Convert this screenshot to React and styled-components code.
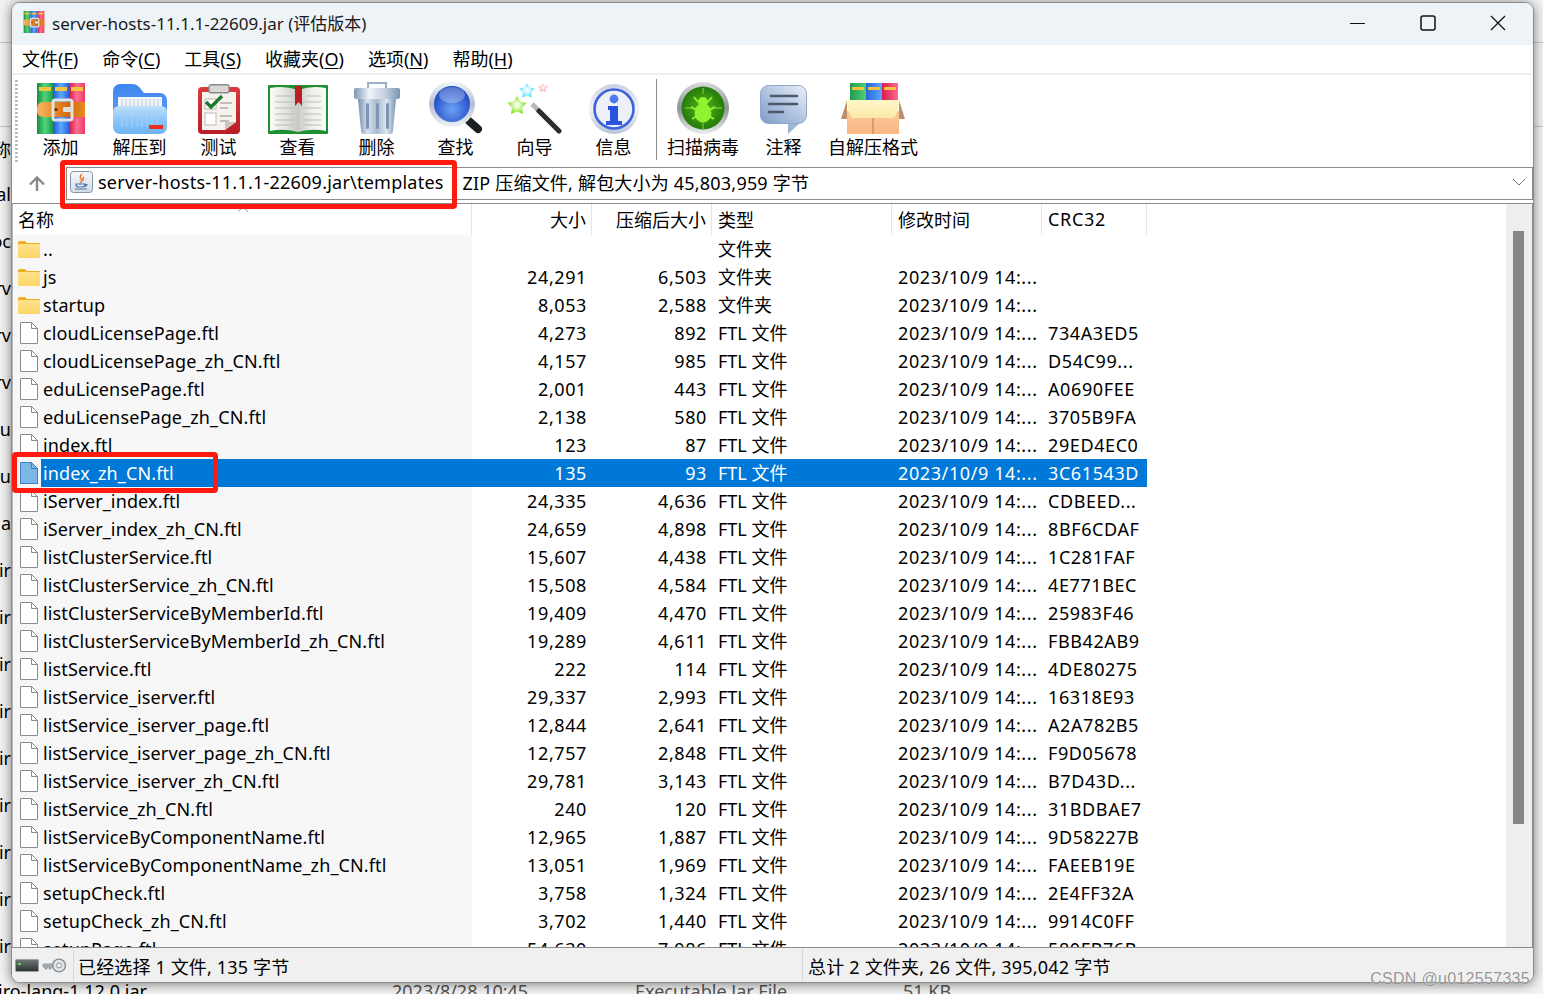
import React from "react";
import styled, { createGlobalStyle } from "styled-components";

const UI_FONT = `"Noto Sans", "Noto Sans CJK SC", sans-serif`;
const BORDER = "#8c8c8c";

const GlobalStyle = createGlobalStyle`
  html, body { margin: 0; padding: 0; overflow: hidden; background: #f3f3f3; }
  * { box-sizing: border-box; }
`;

const hLinear = (id, stops) => (
  <linearGradient id={id} x1="0" y1="0" x2="1" y2="0">
    {stops.map((c, i) => <stop key={i} offset={i / (stops.length - 1)} stopColor={c} />)}
  </linearGradient>
);
const vLinear = (id, stops) => (
  <linearGradient id={id} x1="0" y1="0" x2="0" y2="1">
    {stops.map((c, i) => <stop key={i} offset={i / (stops.length - 1)} stopColor={c} />)}
  </linearGradient>
);

const starPoints = (cx, cy, r) => {
  const pts = [];
  for (let i = 0; i < 10; i++) {
    const rad = i % 2 ? r * 0.55 : r;
    const a = -Math.PI / 2 + (i * Math.PI) / 5;
    pts.push(`${(cx + rad * Math.cos(a)).toFixed(1)},${(cy + rad * Math.sin(a)).toFixed(1)}`);
  }
  return pts.join(" ");
};

const RarIcon = ({ width = 48, height = 51, prefix = "add" }) => (
  <svg width={width} height={height} viewBox="0 0 48 51">
    <defs>
      {hLinear(`${prefix}G`, ["#178c41", "#52d47c", "#1a9a4a"])}
      {hLinear(`${prefix}B`, ["#2457d4", "#5aa9ff", "#2a62dc"])}
      {hLinear(`${prefix}R`, ["#d4164a", "#ff6f90", "#ea3a66"])}
      {hLinear(`${prefix}O`, ["#f6b866", "#e8902c", "#d2690e", "#e98a22"])}
    </defs>
    <rect x="0" y="0" width="16" height="51" fill={`url(#${prefix}G)`} />
    <rect x="16" y="0" width="16" height="51" fill={`url(#${prefix}B)`} />
    <rect x="32" y="0" width="16" height="51" fill={`url(#${prefix}R)`} />
    <rect x="2" y="4" width="12" height="4" fill="#f2c53c" />
    <rect x="18" y="4" width="12" height="4" fill="#f2c53c" />
    <rect x="34" y="4" width="12" height="4" fill="#f2c53c" />
    <path d="M6 19H48V34H6Q0 34 0 26.5T6 19Z" fill={`url(#${prefix}O)`} />
    <rect x="16" y="17" width="19" height="20" rx="2" fill="none" stroke="#e2e2e2" strokeWidth="3" />
    <rect x="26" y="24" width="9" height="5" rx="1" fill="#dcdcdc" />
    <circle cx="19" cy="26.5" r="1.6" fill="#5a3208" />
  </svg>
);

const FolderIcon = () => (
  <svg width="54" height="51" viewBox="0 0 54 51">
    <defs>
      {vLinear("folderBack", ["#3f86ee", "#5d9ff3"])}
      {vLinear("folderFront", ["#bfe0fb", "#8cc6f8", "#6db3f4"])}
    </defs>
    <path d="M0 8A7 7 0 0 1 7 1H19Q24 1 27 5L31 10H47A7 7 0 0 1 54 17V36H0Z" fill="url(#folderBack)" />
    <rect x="5" y="14" width="44" height="22" fill="#f1f4f8" />
    <path d="M9 16V24M13 16V24M17 16V24M21 16V24M25 16V24M29 16V24M33 16V24M37 16V24M41 16V24M45 16V24" stroke="#b9c6d6" strokeWidth="1" />
    <path d="M0 29Q0 23 7 23H47Q54 23 54 29V44A7 7 0 0 1 47 51H7A7 7 0 0 1 0 44Z" fill="url(#folderFront)" />
    <path d="M9 27V44M14 27V44M19 27V44M24 27V44M29 27V44M34 27V44M39 27V44M44 27V44" stroke="#a6d0f6" strokeWidth="1" />
    <rect x="36" y="42" width="14" height="4" fill="#e8301c" />
  </svg>
);

const TestIcon = () => (
  <svg width="42" height="50" viewBox="0 0 42 50">
    <defs>{vLinear("testRed", ["#dc3a3e", "#b81e28"])}</defs>
    <rect x="0" y="3" width="42" height="47" rx="4" fill="url(#testRed)" />
    <path d="M4 8H38V38L27 46H4Z" fill="#f6f3ef" />
    <path d="M38 38L27 46V38Z" fill="#cfc7c0" />
    <rect x="11" y="0.8" width="20" height="8" rx="2" fill="#d8d8d8" stroke="#8a8a8a" strokeWidth="1.4" />
    <rect x="7" y="15" width="11" height="10" fill="#fff" stroke="#b9b3ad" />
    <path d="M8 18L13 23L24 12" fill="none" stroke="#1b7a2c" strokeWidth="3.4" />
    <rect x="7" y="29" width="11" height="12" fill="#fff" stroke="#bdb7b1" />
    <path d="M22 19H34M22 24H30M22 32H34M22 37H31" stroke="#b4aaa2" strokeWidth="1.4" />
  </svg>
);

const BookIcon = () => (
  <svg width="60" height="49" viewBox="0 0 60 49">
    <defs>
      {hLinear("bookL", ["#fbfbf9", "#e6e6e2", "#c8c8c4"])}
      {hLinear("bookR", ["#c8c8c4", "#efefec", "#fafafa"])}
    </defs>
    <rect x="0" y="0" width="60" height="49" rx="1" fill="#1f8f31" />
    <path d="M2 3Q16 0 30 5V47Q16 43 2 46Z" fill="url(#bookL)" />
    <path d="M30 5Q44 0 58 3V46Q44 43 30 47Z" fill="url(#bookR)" />
    <path d="M7 11H26M7 17H26M7 23H26M7 29H26M7 35H26M7 40H26M35 17H53M35 23H53M35 29H53M35 35H53M35 40H53M38 11H53" stroke="#bcbcb8" strokeWidth="1.2" />
    <path d="M27 1H34V21L30.5 17L27 21Z" fill="#bd1d22" />
  </svg>
);

const TrashIcon = () => (
  <svg width="46" height="53" viewBox="0 0 46 53">
    <defs>
      {hLinear("trashLid", ["#7d97b6", "#eef4fa", "#c4d2e0", "#7c95b2"])}
      {hLinear("trashBody", ["#7590b0", "#d6e1ec", "#a8bbcf", "#dde6ef", "#7d96b3"])}
    </defs>
    <path d="M14 8V2H32V8" fill="none" stroke="#9cb0c4" strokeWidth="2" />
    <path d="M4 18H42L39 50Q39 53 36 53H10Q7 53 7 50Z" fill="url(#trashBody)" />
    <rect x="0" y="7" width="46" height="11" rx="2" fill="url(#trashLid)" />
    <rect x="12" y="22" width="3" height="26" rx="1.5" fill="#7e95b1" />
    <rect x="22" y="22" width="3" height="26" rx="1.5" fill="#7e95b1" />
    <rect x="32" y="22" width="3" height="26" rx="1.5" fill="#7e95b1" />
  </svg>
);

const SearchIcon = () => (
  <svg width="54" height="53" viewBox="0 0 54 53">
    <defs>
      <radialGradient id="lens" cx="0.5" cy="0.65" r="0.6">
        <stop offset="0" stopColor="#6da2f4" />
        <stop offset="1" stopColor="#1c46c4" />
      </radialGradient>
      {vLinear("lensRing", ["#f4f7fb", "#b4c0d0", "#eef1f6"])}
    </defs>
    <path d="M36 36L49 48" stroke="#8c8c8c" strokeWidth="6" />
    <path d="M40 40L49 48" stroke="#1c1f24" strokeWidth="8" strokeLinecap="round" />
    <circle cx="23" cy="23" r="23" fill="url(#lensRing)" />
    <circle cx="23" cy="23" r="18" fill="url(#lens)" />
    <ellipse cx="23" cy="14" rx="13" ry="8" fill="#fff" opacity="0.28" />
  </svg>
);

const WizardIcon = () => (
  <svg width="54" height="50" viewBox="0 0 54 50">
    <defs>
      <radialGradient id="starG"><stop offset="0.2" stopColor="#f2ffe0" /><stop offset="1" stopColor="#7fe019" /></radialGradient>
      <radialGradient id="starC"><stop offset="0.2" stopColor="#f0ffff" /><stop offset="1" stopColor="#4fdcff" /></radialGradient>
      <radialGradient id="starP"><stop offset="0.2" stopColor="#fff2f2" /><stop offset="1" stopColor="#ff9aa8" /></radialGradient>
    </defs>
    <polygon points={starPoints(9, 22, 10)} fill="url(#starG)" />
    <polygon points={starPoints(19, 7, 8)} fill="url(#starC)" />
    <polygon points={starPoints(35, 4, 5)} fill="url(#starP)" />
    <path d="M24 20L31 27" stroke="#b8b8b8" strokeWidth="5" />
    <path d="M31 27L51 47" stroke="#2c2e32" strokeWidth="5" strokeLinecap="round" />
  </svg>
);

const InfoIcon = () => (
  <svg width="50" height="50" viewBox="0 0 50 50">
    <defs>{vLinear("infoRing", ["#c8d2e4", "#f2f4f8", "#b8c4da"])}</defs>
    <circle cx="25" cy="25" r="25" fill="url(#infoRing)" />
    <circle cx="25" cy="25" r="19.5" fill="#edf0f6" stroke="#3f62dd" strokeWidth="2.6" />
    <circle cx="25" cy="15" r="4.4" fill="#4e7cf0" />
    <path d="M19 22H29V37H33V41H17V37H21V26H19Z" fill="#2a54e0" />
  </svg>
);

const ScanIcon = () => (
  <svg width="52" height="52" viewBox="0 0 52 52">
    <defs>
      {vLinear("scanRing", ["#d8dcdc", "#8c9494", "#e8ecec"])}
      <radialGradient id="scanDisc">
        <stop offset="0" stopColor="#5db51f" />
        <stop offset="1" stopColor="#237a08" />
      </radialGradient>
    </defs>
    <circle cx="26" cy="26" r="26" fill="url(#scanRing)" />
    <circle cx="26" cy="26" r="21.5" fill="url(#scanDisc)" />
    <path d="M26 6V12M8 26H14M38 26H45M26 41V47" stroke="#6cc22e" strokeWidth="1.4" />
    <path d="M17 15L21 20M35 15L31 20M14 25L20 28M38 25L32 28M15 37L20 34M37 37L32 34" stroke="#8cf030" strokeWidth="2" fill="none" />
    <ellipse cx="26" cy="31" rx="8.5" ry="9.5" fill="#90f230" />
    <circle cx="26" cy="20" r="5" fill="#90f230" />
  </svg>
);

const CommentIcon = () => (
  <svg width="48" height="49" viewBox="0 0 48 49">
    <defs>
      <linearGradient id="bubble" x1="0" y1="1" x2="1" y2="0">
        <stop offset="0" stopColor="#7d9bc9" />
        <stop offset="0.55" stopColor="#b7c9e2" />
        <stop offset="1" stopColor="#edf2f9" />
      </linearGradient>
    </defs>
    <path d="M28 37V49L41 37Z" fill="#a3b6d0" />
    <rect x="0.5" y="0.5" width="46" height="38" rx="8" fill="url(#bubble)" stroke="#8fa7cb" />
    <path d="M11 11H37M9 19H37M9 27H23" stroke="#4c5a6e" strokeWidth="2.6" strokeLinecap="round" />
  </svg>
);

const SfxIcon = () => (
  <svg width="64" height="51" viewBox="0 0 64 51">
    <defs>
      {hLinear("sfxG", ["#1f9c4c", "#4fd07a"])}
      {hLinear("sfxB", ["#2a62dc", "#5aa8ff"])}
      {hLinear("sfxR", ["#d81c4e", "#ff6a8c"])}
      {vLinear("sfxBox", ["#fdc89a", "#f7b884"])}
      {vLinear("sfxFlap", ["#fff6c8", "#fce9a8"])}
    </defs>
    <rect x="9" y="0" width="16" height="20" fill="url(#sfxG)" />
    <rect x="25" y="0" width="16" height="20" fill="url(#sfxB)" />
    <rect x="41" y="0" width="16" height="20" fill="url(#sfxR)" />
    <rect x="11" y="4" width="12" height="3" fill="#f2c53c" />
    <rect x="27" y="4" width="12" height="3" fill="#f2c53c" />
    <rect x="43" y="4" width="12" height="3" fill="#f2c53c" />
    <path d="M0 36L6 17V36ZM64 36L58 17V36Z" fill="#bd8f6c" />
    <rect x="6" y="28" width="52" height="23" fill="url(#sfxBox)" />
    <rect x="31" y="34" width="2" height="17" fill="#d99d70" />
    <path d="M5 17H59L55 32Q54 35 51 35H13Q10 35 9 32Z" fill="url(#sfxFlap)" />
  </svg>
);

const JavaIcon = () => (
  <svg width="23" height="22" viewBox="0 0 23 22">
    <defs>{vLinear("javaBg", ["#f7f8fa", "#d3dbe4"])}</defs>
    <rect x="0.5" y="0.5" width="22" height="21" rx="3" fill="url(#javaBg)" stroke="#8496aa" />
    <path d="M12 3Q9 6 11 8T10 12M14 6Q12 8 13.5 9.5" fill="none" stroke="#e8762b" strokeWidth="1.4" />
    <path d="M6 13H15Q15 16 12.5 16H8.5Q6 16 6 13ZM15 13.5H17Q17 15 14.5 15.5M5 18H17" fill="none" stroke="#4f78aa" strokeWidth="1.2" />
  </svg>
);

const UpArrow = () => (
  <svg width="18" height="16" viewBox="0 0 18 16">
    <path d="M9 15V2M2 8.5L9 1.5L16 8.5" fill="none" stroke="#8a8a8a" strokeWidth="2.4" />
  </svg>
);

const DocIcon = ({ $selected }) => (
  <svg width="18" height="22" viewBox="0 0 18 22">
    <path
      d="M0.5 0.5H11.5L17.5 6.5V21.5H0.5Z"
      fill={$selected ? "#7db7e8" : "#fff"}
      stroke={$selected ? "#3d80bf" : "#8a8a8a"}
    />
    <path d="M11.5 0.5V6.5H17.5" fill="none" stroke={$selected ? "#3d80bf" : "#8a8a8a"} />
  </svg>
);

const DirIcon = () => (
  <svg width="22" height="17" viewBox="0 0 22 17">
    <defs>{vLinear("dirFront", ["#ffe28c", "#fcd568"])}</defs>
    <path d="M0 1.5Q0 0 1.5 0H7L9 2H22V5H0Z" fill="#eeb125" />
    <rect x="0" y="3" width="22" height="14" rx="1" fill="url(#dirFront)" />
  </svg>
);

const DriveIcon = () => (
  <svg width="24" height="13" viewBox="0 0 24 13">
    <defs>{vLinear("driveBg", ["#6f7779", "#2d3234"])}</defs>
    <rect x="0.5" y="0.5" width="23" height="12" rx="1" fill="url(#driveBg)" stroke="#9aa0a2" />
    <rect x="3" y="4" width="3" height="2" fill="#54e04a" />
  </svg>
);

const KeyIcon = () => (
  <svg width="24" height="15" viewBox="0 0 24 15">
    <circle cx="17" cy="7.5" r="6.4" fill="#dfe4e8" stroke="#858d92" strokeWidth="1.4" />
    <circle cx="17" cy="7.5" r="2.4" fill="#fff" stroke="#858d92" />
    <path d="M11 6H1V9H3V11H5V9H7V11H9V9H11Z" fill="#a6adb2" stroke="#7c8489" strokeWidth="0.6" />
  </svg>
);

const TOOLS = [
  { label: "添加", icon: <RarIcon /> },
  { label: "解压到", icon: <FolderIcon /> },
  { label: "测试", icon: <TestIcon /> },
  { label: "查看", icon: <BookIcon /> },
  { label: "删除", icon: <TrashIcon /> },
  { label: "查找", icon: <SearchIcon /> },
  { label: "向导", icon: <WizardIcon /> },
  { label: "信息", icon: <InfoIcon /> },
];
const TOOLS_AFTER = [
  { label: "扫描病毒", icon: <ScanIcon /> },
  { label: "注释", icon: <CommentIcon /> },
  { label: "自解压格式", icon: <SfxIcon /> },
];

const MENUS = [
  ["文件", "F"],
  ["命令", "C"],
  ["工具", "S"],
  ["收藏夹", "O"],
  ["选项", "N"],
  ["帮助", "H"],
];

const TIME = "2023/10/9 14:...";
const FILES = [
  ["..", "", "", "文件夹", "", ""],
  ["js", "24,291", "6,503", "文件夹", TIME, ""],
  ["startup", "8,053", "2,588", "文件夹", TIME, ""],
  ["cloudLicensePage.ftl", "4,273", "892", "FTL 文件", TIME, "734A3ED5"],
  ["cloudLicensePage_zh_CN.ftl", "4,157", "985", "FTL 文件", TIME, "D54C99..."],
  ["eduLicensePage.ftl", "2,001", "443", "FTL 文件", TIME, "A0690FEE"],
  ["eduLicensePage_zh_CN.ftl", "2,138", "580", "FTL 文件", TIME, "3705B9FA"],
  ["index.ftl", "123", "87", "FTL 文件", TIME, "29ED4EC0"],
  ["index_zh_CN.ftl", "135", "93", "FTL 文件", TIME, "3C61543D"],
  ["iServer_index.ftl", "24,335", "4,636", "FTL 文件", TIME, "CDBEED..."],
  ["iServer_index_zh_CN.ftl", "24,659", "4,898", "FTL 文件", TIME, "8BF6CDAF"],
  ["listClusterService.ftl", "15,607", "4,438", "FTL 文件", TIME, "1C281FAF"],
  ["listClusterService_zh_CN.ftl", "15,508", "4,584", "FTL 文件", TIME, "4E771BEC"],
  ["listClusterServiceByMemberId.ftl", "19,409", "4,470", "FTL 文件", TIME, "25983F46"],
  ["listClusterServiceByMemberId_zh_CN.ftl", "19,289", "4,611", "FTL 文件", TIME, "FBB42AB9"],
  ["listService.ftl", "222", "114", "FTL 文件", TIME, "4DE80275"],
  ["listService_iserver.ftl", "29,337", "2,993", "FTL 文件", TIME, "16318E93"],
  ["listService_iserver_page.ftl", "12,844", "2,641", "FTL 文件", TIME, "A2A782B5"],
  ["listService_iserver_page_zh_CN.ftl", "12,757", "2,848", "FTL 文件", TIME, "F9D05678"],
  ["listService_iserver_zh_CN.ftl", "29,781", "3,143", "FTL 文件", TIME, "B7D43D..."],
  ["listService_zh_CN.ftl", "240", "120", "FTL 文件", TIME, "31BDBAE7"],
  ["listServiceByComponentName.ftl", "12,965", "1,887", "FTL 文件", TIME, "9D58227B"],
  ["listServiceByComponentName_zh_CN.ftl", "13,051", "1,969", "FTL 文件", TIME, "FAEEB19E"],
  ["setupCheck.ftl", "3,758", "1,324", "FTL 文件", TIME, "2E4FF32A"],
  ["setupCheck_zh_CN.ftl", "3,702", "1,440", "FTL 文件", TIME, "9914C0FF"],
  ["setupPage.ftl", "54,630", "7,986", "FTL 文件", TIME, "580FB76B"],
];
const SELECTED = "index_zh_CN.ftl";

const BACK_ROWS = ["称", "al", "oc", "rv", "rv", "rv", "cu", "cu", "a", "ir", "ir", "ir", "ir", "ir", "ir", "ir", "ir", "ir"];

const App = () => (
  <Desktop>
    <GlobalStyle />
    <Backdrop>
      <BackBand $height={43} />
      <BackBand $height={84} />
      <BackRows>
        {BACK_ROWS.map((text, i) => (
          <BackRow key={i}>{text}</BackRow>
        ))}
      </BackRows>
      <BackFooter>
        <BackCell $width={394}>iro-lang-1.12.0.jar</BackCell>
        <BackCell $width={243} $muted>2023/8/28 10:45</BackCell>
        <BackCell $width={268} $muted>Executable Jar File</BackCell>
        <BackCell $width={80} $muted>51 KB</BackCell>
      </BackFooter>
    </Backdrop>

    <Window>
      <TitleBar>
        <TitleIcon><RarIcon width={24} height={22} prefix="title" /></TitleIcon>
        <TitleText>server-hosts-11.1.1-22609.jar (评估版本)</TitleText>
        <WindowButton>
          <svg width="16" height="16" viewBox="0 0 16 16"><path d="M0 8.5H15" stroke="#111" strokeWidth="1.2" /></svg>
        </WindowButton>
        <WindowButton>
          <svg width="16" height="16" viewBox="0 0 16 16"><rect x="1" y="1" width="14" height="14" rx="2" fill="none" stroke="#111" strokeWidth="1.5" /></svg>
        </WindowButton>
        <WindowButton>
          <svg width="16" height="16" viewBox="0 0 16 16"><path d="M1 1L15 15M15 1L1 15" stroke="#111" strokeWidth="1.3" /></svg>
        </WindowButton>
      </TitleBar>

      <MenuBar>
        {MENUS.map(([text, key]) => (
          <MenuItem key={key}>{text}(<u>{key}</u>)</MenuItem>
        ))}
      </MenuBar>

      <Toolbar>
        <Gripper />
        {TOOLS.map(tool => (
          <Tool key={tool.label}>
            <ToolIcon>{tool.icon}</ToolIcon>
            <ToolLabel>{tool.label}</ToolLabel>
          </Tool>
        ))}
        <ToolSeparator />
        {TOOLS_AFTER.map(tool => (
          <Tool key={tool.label}>
            <ToolIcon>{tool.icon}</ToolIcon>
            <ToolLabel>{tool.label}</ToolLabel>
          </Tool>
        ))}
      </Toolbar>

      <AddressBar>
        <UpButton><UpArrow /></UpButton>
        <AddressBox>
          <JavaIcon />
          <AddressPath>server-hosts-11.1.1-22609.jar\templates</AddressPath>
          <AddressInfo>- ZIP 压缩文件, 解包大小为 45,803,959 字节</AddressInfo>
          <svg width="14" height="8" viewBox="0 0 14 8"><path d="M1 1L7 7L13 1" fill="none" stroke="#777" strokeWidth="1" /></svg>
        </AddressBox>
      </AddressBar>

      <ListPane>
        <Table>
          <HeaderRow>
            <HeaderCell $first>
              名称
              <SortMark>
                <svg width="12" height="6" viewBox="0 0 12 6"><path d="M1 5.5L6 1L11 5.5" fill="none" stroke="#8a8a8a" /></svg>
              </SortMark>
            </HeaderCell>
            <HeaderCell $right>大小</HeaderCell>
            <HeaderCell $right>压缩后大小</HeaderCell>
            <HeaderCell>类型</HeaderCell>
            <HeaderCell>修改时间</HeaderCell>
            <HeaderCell $latin>CRC32</HeaderCell>
          </HeaderRow>
          {FILES.map(([name, size, packed, type, time, crc]) => {
            const selected = name === SELECTED;
            const isDir = type === "文件夹";
            return (
              <Row key={name}>
                <NameCell>
                  <FileIcon $isDir={isDir}>{isDir ? <DirIcon /> : <DocIcon $selected={selected} />}</FileIcon>
                  <NameText $selected={selected}>{name}</NameText>
                </NameCell>
                <Cell $right $selected={selected}>{size}</Cell>
                <Cell $right $selected={selected}>{packed}</Cell>
                <TypeCell $selected={selected}>{type}</TypeCell>
                <Cell $selected={selected}>{time}</Cell>
                <Cell $selected={selected}>{crc}</Cell>
              </Row>
            );
          })}
        </Table>
        <ScrollTrack>
          <ScrollThumb />
        </ScrollTrack>
      </ListPane>

      <StatusBar>
        <StatusIcons>
          <DriveIcon />
          <KeyIcon />
        </StatusIcons>
        <StatusLeft>已经选择 1 文件, 135 字节</StatusLeft>
        <StatusRight>总计 2 文件夹, 26 文件, 395,042 字节</StatusRight>
      </StatusBar>
    </Window>

    <AddressMark />
    <RowMark />
    <Watermark>CSDN @u012557335</Watermark>
  </Desktop>
);

export default App;

const Desktop = styled.div`
  position: relative;
  width: 1543px;
  height: 994px;
  overflow: hidden;
  background: #f3f3f3;
  font-family: ${UI_FONT};
  font-size: 18px;
  color: #000;
`;

const Backdrop = styled.div`
  position: absolute;
  inset: 0;
  display: flex;
  flex-direction: column;
`;

const BackBand = styled.div`
  height: ${props => props.$height}px;
  flex: none;
  border-bottom: 1px solid #c4c4c4;
`;

const BackRows = styled.div`
  display: flex;
  flex-direction: column;
`;

const BackRow = styled.div`
  width: 11px;
  height: 47px;
  display: flex;
  align-items: center;
  justify-content: flex-end;
  overflow: hidden;
  white-space: nowrap;
  &:first-child {
    height: 43.5px;
  }
`;

const BackFooter = styled.div`
  position: absolute;
  left: -2px;
  bottom: -9px;
  display: flex;
  height: 24px;
  align-items: center;
`;

const BackCell = styled.div`
  width: ${props => props.$width}px;
  flex: none;
  white-space: nowrap;
  color: ${props => (props.$muted ? "#555" : "#000")};
`;

const Window = styled.div`
  position: absolute;
  left: 11px;
  top: 2px;
  width: 1523px;
  height: 981px;
  display: flex;
  flex-direction: column;
  background: #fff;
  border: 1px solid ${BORDER};
  border-radius: 9px;
  overflow: hidden;
  box-shadow: 0 1px 12px rgba(0, 0, 0, 0.5);
`;

const TitleBar = styled.div`
  height: 42px;
  flex: none;
  display: flex;
  align-items: center;
  padding: 0 0 4px 10px;
  background: #eef3f8;
`;

const TitleIcon = styled.div`
  display: flex;
  margin-right: 6px;
`;

const TitleText = styled.div`
  flex: 1;
  font-size: 17px;
  white-space: nowrap;
  color: #1a1a1a;
`;

const WindowButton = styled.div`
  width: 70px;
  display: flex;
  align-items: center;
  justify-content: center;
  padding-top: 2px;
`;

const MenuBar = styled.div`
  height: 30px;
  flex: none;
  display: flex;
  align-items: center;
  gap: 24px;
  padding: 0 0 2px 10px;
  border-bottom: 2px solid #f0f0f0;
`;

const MenuItem = styled.div`
  white-space: nowrap;
  u {
    text-underline-offset: 2px;
  }
`;

const Toolbar = styled.div`
  height: 92px;
  flex: none;
  display: flex;
  align-items: flex-start;
  padding: 5px 0 0 3px;
`;

const Gripper = styled.div`
  width: 3px;
  height: 82px;
  margin-right: 3px;
  background: repeating-linear-gradient(to bottom, #bdbdbd 0 2px, transparent 2px 4px);
`;

const Tool = styled.div`
  min-width: 79px;
  padding: 0 5px;
  display: flex;
  flex-direction: column;
  align-items: center;
`;

const ToolIcon = styled.div`
  height: 54px;
  display: flex;
  align-items: flex-end;
`;

const ToolLabel = styled.div`
  height: 24px;
  margin-top: 1px;
  line-height: 24px;
  white-space: nowrap;
`;

const ToolSeparator = styled.div`
  width: 1px;
  height: 81px;
  margin: -1px 5px 0 3px;
  background: #8c8c8c;
`;

const AddressBar = styled.div`
  height: 33px;
  flex: none;
  display: flex;
  align-items: stretch;
`;

const UpButton = styled.div`
  width: 54px;
  flex: none;
  padding-left: 16px;
  display: flex;
  align-items: center;
`;

const AddressBox = styled.div`
  flex: 1;
  display: flex;
  align-items: center;
  padding: 0 6px 3px 3px;
  border: 1px solid ${BORDER};
`;

const AddressPath = styled.div`
  margin-left: 5px;
  letter-spacing: 0.23px;
  white-space: nowrap;
`;

const AddressInfo = styled.div`
  flex: 1;
  margin-left: 8px;
  letter-spacing: 0.2px;
  white-space: nowrap;
`;

const ListPane = styled.div`
  flex: 1;
  min-height: 0;
  display: flex;
  margin-top: 3px;
  border-top: 1px solid ${BORDER};
  border-left: 1px solid #b8b8b8;
  border-right: 1px solid ${BORDER};
  overflow: hidden;
`;

const Table = styled.div`
  flex: 1;
  min-width: 0;
  overflow: hidden;
`;

const COLUMNS = "459px 120px 120px 180px 150px 105px";

const HeaderRow = styled.div`
  display: grid;
  grid-template-columns: ${COLUMNS};
  height: 31px;
`;

const HeaderCell = styled.div`
  position: relative;
  display: flex;
  align-items: center;
  justify-content: ${props => (props.$right ? "flex-end" : "flex-start")};
  padding: 0 5px 2px ${props => (props.$first ? 5 : 6)}px;
  border-right: 1px solid #e5e5e5;
  letter-spacing: ${props => (props.$latin ? "0.7px" : "0")};
  white-space: nowrap;
`;

const SortMark = styled.span`
  position: absolute;
  left: 224px;
  top: 2px;
  display: flex;
`;

const Row = styled.div`
  display: grid;
  grid-template-columns: ${COLUMNS};
  height: 28px;
`;

const NameCell = styled.div`
  display: flex;
  align-items: stretch;
  min-width: 0;
  background: #f7f7f7;
`;

const FileIcon = styled.div`
  width: 28px;
  flex: none;
  display: flex;
  align-items: center;
  padding-left: ${props => (props.$isDir ? 5 : 7)}px;
`;

const NameText = styled.div`
  flex: 1;
  display: flex;
  align-items: center;
  padding-left: 2px;
  letter-spacing: 0.13px;
  white-space: nowrap;
  background: ${props => (props.$selected ? "#0078d7" : "transparent")};
  color: ${props => (props.$selected ? "#fff" : "#000")};
`;

const Cell = styled.div`
  display: flex;
  align-items: center;
  justify-content: ${props => (props.$right ? "flex-end" : "flex-start")};
  padding: 0 5px 0 6px;
  letter-spacing: 0.6px;
  white-space: nowrap;
  background: ${props => (props.$selected ? "#0078d7" : "transparent")};
  color: ${props => (props.$selected ? "#fff" : "#000")};
`;

const TypeCell = styled(Cell)`
  padding-bottom: 2px;
  letter-spacing: 0;
`;

const ScrollTrack = styled.div`
  width: 26px;
  flex: none;
  padding: 27px 8px 0 7px;
  background: #eeeeee;
`;

const ScrollThumb = styled.div`
  height: 593px;
  background: #868686;
`;

const StatusBar = styled.div`
  height: 35px;
  flex: none;
  display: flex;
  align-items: center;
  background: #f0f0f0;
  border-top: 1px solid ${BORDER};
`;

const StatusIcons = styled.div`
  width: 62px;
  flex: none;
  height: 100%;
  display: flex;
  align-items: center;
  gap: 3px;
  padding-left: 3px;
  border-right: 1px solid #d8d8d8;
`;

const StatusLeft = styled.div`
  width: 729px;
  flex: none;
  height: 100%;
  display: flex;
  align-items: center;
  padding: 2px 0 0 4px;
  letter-spacing: 0.15px;
  border-right: 1px solid #d8d8d8;
  white-space: nowrap;
`;

const StatusRight = styled.div`
  flex: 1;
  padding: 2px 0 0 5px;
  letter-spacing: 0.2px;
  white-space: nowrap;
`;

const AddressMark = styled.div`
  position: absolute;
  left: 60px;
  top: 160px;
  width: 397px;
  height: 49px;
  border: 5px solid #ff1a0f;
  border-radius: 4px;
`;

const RowMark = styled.div`
  position: absolute;
  left: 12px;
  top: 452px;
  width: 206px;
  height: 41px;
  border: 5px solid #ff1a0f;
  border-radius: 4px;
`;

const Watermark = styled.div`
  position: absolute;
  right: 13px;
  top: 970px;
  font-family: "Liberation Sans", sans-serif;
  font-size: 16px;
  letter-spacing: 0.3px;
  color: rgba(130, 130, 130, 0.85);
  text-shadow: 0 0 1px #fff;
  white-space: nowrap;
`;
